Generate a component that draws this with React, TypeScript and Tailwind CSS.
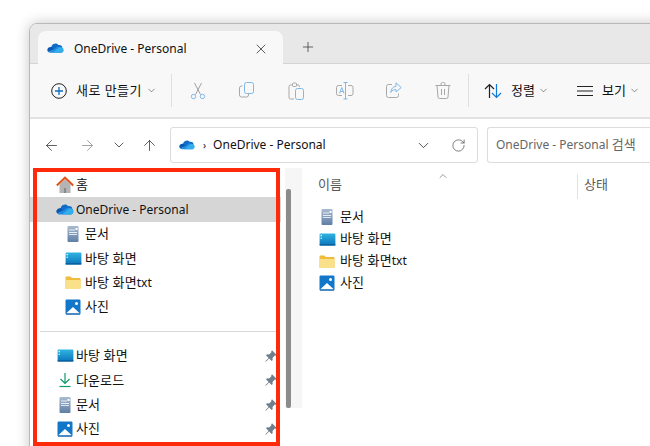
import React from "react";
import { ArrowLeft, ArrowRight, ArrowUp, ChevronDown, ChevronUp, RotateCw, X, Plus } from "lucide-react";

const font = { fontFamily: '"Noto Sans", "Noto Sans CJK KR", sans-serif' };

function Cloud({ s = 26 }: { s?: number }) {
  return (
    <svg width={s} height={s * 0.62} viewBox="0 0 26 16">
      <path d="M10 1.500c2.600-1.600 6-.8 7.600 1.600 3-.6 5.600 1 6 3.400L9 12 5 7.200c.4-1 1-1.400 1.800-1.600.4-1.800 1.600-3.200 3.200-4.100z" fill="#0f6cc8" />
      <path d="M5.500 6C2.800 6 .5 8 .5 10.500c0 1.300.6 2.500 1.500 3.200L11 9.500 8 7c-.8-.6-1.600-1-2.500-1z" fill="#0a57b0" />
      <path d="M17 5.500c-1.600 0-3 .8-3.800 2L2 13.700c.7.800 1.800 1.300 3 1.300h17.500L24.800 8c-1-1.500-4-2.500-7.800-2.500z" fill="#1f8ae0" />
      <path d="M20 6.500c3 0 5.500 1.800 5.500 4.500 0 2.300-1.800 4-4 4H9l9-8c.6-.4 1.300-.5 2-.5z" fill="#33aeea" />
    </svg>
  );
}
function Home() {
  return (
    <svg width="18" height="18" viewBox="0 0 18 18">
      <path d="M3.500 8.500V17h4v-5h3v5h4V8.500L9 3.500z" fill="#b4b4b4" />
      <path d="M7.500 12h3v5h-3z" fill="#8a8a8a" />
      <path d="M.8 9.500L9 1.700l8.200 7.800" fill="none" stroke="#e0541c" strokeWidth="2" />
    </svg>
  );
}
function Doc() {
  return (
    <svg width="16" height="18" viewBox="0 0 16 18">
      <defs>
        <linearGradient id="docg" x1="0" x2="0" y1="0" y2="1">
          <stop offset="0" stopColor="#a9bbd0" />
          <stop offset="1" stopColor="#5f7ea6" />
        </linearGradient>
      </defs>
      <rect x="2.500" y="1" width="11" height="16" rx="1" fill="url(#docg)" />
      <rect x="4" y="4.500" width="6" height="1" fill="#e8eef5" />
      <rect x="4" y="7" width="8" height="1" fill="#e8eef5" />
      <rect x="4" y="9" width="8" height="1" fill="#dde5ee" />
      <rect x="10.500" y="3" width="2" height="2" fill="#fff" />
    </svg>
  );
}
function Desktop() {
  return (
    <svg width="17" height="13" viewBox="0 0 18 14">
      <defs>
        <linearGradient id="deskg" x1="0" x2="0" y1="0" y2="1">
          <stop offset="0" stopColor="#2fb5e0" />
          <stop offset="1" stopColor="#0b74bd" />
        </linearGradient>
      </defs>
      <rect x="0.500" y="0.500" width="17" height="13" rx="1" fill="url(#deskg)" />
      <rect x="1.500" y="2" width="1.500" height="1.500" fill="#e8fbff" />
      <rect x="1.500" y="5" width="1.500" height="1.500" fill="#bdeeff" />
      <rect x="0.500" y="12" width="17" height="1.500" fill="#0a5f9c" />
    </svg>
  );
}
function Folder() {
  return (
    <svg width="16" height="13" viewBox="0 0 16 13">
      <path d="M0.500 1.500a1 1 0 0 1 1-1h4l1.500 1.500h7.500a1 1 0 0 1 1 1v9a1 1 0 0 1-1 1h-13a1 1 0 0 1-1-1z" fill="#f0bc3e" />
      <path d="M0.500 4h15v8a1 1 0 0 1-1 1h-13a1 1 0 0 1-1-1z" fill="#fbe08a" />
    </svg>
  );
}
function Picture() {
  return (
    <svg width="16" height="16" viewBox="0 0 16 16">
      <rect x="0.500" y="0.500" width="15" height="15" rx="1.200" fill="#1277c9" />
      <path d="M1 14.500L8 8l7 6.500z" fill="#fff" />
      <circle cx="11.500" cy="4.500" r="1.500" fill="#fff" />
      <path d="M1 14.500h14v1H1z" fill="#0c5da5" />
    </svg>
  );
}
function Download() {
  return (
    <svg width="14" height="16" viewBox="0 0 14 16" fill="none" stroke="#109a6c" strokeWidth="1.200">
      <path d="M7 1v10M2.500 7L7 11.500 11.500 7" />
      <path d="M1.500 14.500h11" />
    </svg>
  );
}
function Pin() {
  return (
    <svg width="12" height="12" viewBox="0 0 12 12">
      <path d="M7 .3L11.700 5l-1.100 .8-.8-.2-2.300 2.300.2 2.100-1 1L4.100 8.400.8 11.700.3 11.200 3.600 7.900 1 5.300l1-1 2.100.2 2.300-2.300-.2-.8z" fill="#6f7f8c" />
    </svg>
  );
}
function Cut() {
  return (
    <svg width="18" height="18" viewBox="0 0 18 18" fill="none" strokeWidth="1">
      <path d="M5.500 1l6 11.500M12.500 1l-6 11.500" stroke="#a0a0a0" />
      <circle cx="4.500" cy="14.500" r="2.200" stroke="#7fb8e8" />
      <circle cx="13.500" cy="14.500" r="2.200" stroke="#7fb8e8" />
    </svg>
  );
}
function Copy() {
  return (
    <svg width="16" height="16" viewBox="0 0 16 16" fill="none" strokeWidth="1">
      <path d="M3.500 4H2.500a2 2 0 0 0-2 2v7a2 2 0 0 0 2 2h5a2 2 0 0 0 2-2v-1" stroke="#a8a8a8" />
      <rect x="5.500" y=".5" width="9" height="11" rx="2" stroke="#7fb8e8" />
    </svg>
  );
}
function Paste() {
  return (
    <svg width="16" height="18" viewBox="0 0 16 18" fill="none" strokeWidth="1">
      <path d="M5 3H2.500A1.500 1.500 0 0 0 1 4.500v11A1.500 1.500 0 0 0 2.500 17H6M11.500 5V4.500A1.500 1.500 0 0 0 10 3H8" stroke="#a8a8a8" />
      <rect x="4.500" y="1" width="4" height="3.500" rx="1" stroke="#a8a8a8" />
      <rect x="7.500" y="6.500" width="8" height="11" rx="2" stroke="#7fb8e8" />
    </svg>
  );
}
function Rename() {
  return (
    <svg width="18" height="18" viewBox="0 0 18 18" fill="none" strokeWidth="1">
      <path d="M6 3.500H2.500a2 2 0 0 0-2 2v6a2 2 0 0 0 2 2H6M12 3.500h3a2 2 0 0 1 2 2v6a2 2 0 0 1-2 2h-3" stroke="#a8a8a8" />
      <path d="M9.500.5v16.500M7.500.5h4M7.500 17h4" stroke="#7fb8e8" />
      <path d="M3.500 11.500L5.800 5.500 8 11.500M4.300 9.500h3" stroke="#7fb8e8" />
    </svg>
  );
}
function Share() {
  return (
    <svg width="16" height="16" viewBox="0 0 16 16" fill="none" strokeWidth="1">
      <path d="M6 2.500H2.500a2 2 0 0 0-2 2v9a2 2 0 0 0 2 2h8a2 2 0 0 0 2-2v-2" stroke="#a8a8a8" />
      <path d="M10 .8l5.200 4.700L10 10V7.500c-2.500 0-4 1-5.200 3 .2-3.500 2-5.800 5.200-6.200z" stroke="#7fb8e8" />
    </svg>
  );
}
function Trash() {
  return (
    <svg width="16" height="17" viewBox="0 0 16 17" fill="none" stroke="#a8a8a8" strokeWidth="1">
      <path d="M.5 3.500h15M6 3.500V2a1.500 1.500 0 0 1 1.500-1.500h1A1.500 1.500 0 0 1 10 2v1.500" />
      <path d="M2 3.500l1 11.500a1.500 1.500 0 0 0 1.500 1.500h7A1.500 1.500 0 0 0 13 15l1-11.500" />
      <path d="M6.500 7v6M9.500 7v6" />
    </svg>
  );
}
function Sort() {
  return (
    <svg width="18" height="16" viewBox="0 0 18 16" fill="none" strokeWidth="1.200">
      <path d="M5.500 15V1.500M1 6l4.500-4.500L10 6" stroke="#222" />
      <path d="M12.500 1v13.500M8 10l4.500 4.500L17 10" stroke="#0f7bd6" />
    </svg>
  );
}
function Lines() {
  return (
    <svg width="16" height="12" viewBox="0 0 16 12" fill="none" stroke="#222" strokeWidth="1">
      <path d="M0 1.500h16M0 6h16M0 10.500h16" />
    </svg>
  );
}
function NewIcon() {
  return (
    <svg width="16" height="16" viewBox="0 0 16 16" fill="none">
      <circle cx="8" cy="8" r="7.300" stroke="#222" strokeWidth="1" />
      <path d="M8 4v8M4 8h8" stroke="#0f6cbd" strokeWidth="1.300" />
    </svg>
  );
}

function ToolIcon({ children }: { children: React.ReactNode }) {
  return <div className="flex w-[49px] justify-center">{children}</div>;
}

function Kr({ children }: { children: React.ReactNode }) {
  return <span className="text-[13px] tracking-[0.1px]">{children}</span>;
}

function NavRow({ icon, label, indent, active, pin }: { icon: React.ReactNode; label: React.ReactNode; indent?: boolean; active?: boolean; pin?: boolean }) {
  return (
    <div className={`flex h-[24.4px] items-center text-[12px] text-[#111] ${active ? "bg-[#d6d6d6]" : ""} ${indent ? "pl-[33px]" : "pl-[25px]"}`}>
      <div className={`-ml-[1px] flex w-[22px] shrink-0 justify-center ${indent ? "mr-[1px]" : "mr-0"}`}>{icon}</div>
      <span className="flex-1 whitespace-pre">{label}</span>
      {pin && <div className="pr-[4px]"><Pin /></div>}
    </div>
  );
}

function FileRow({ icon, label }: { icon: React.ReactNode; label: React.ReactNode }) {
  return (
    <div className="flex h-[22px] items-center text-[12px] text-[#111]">
      <div className="flex w-[18px] justify-center">{icon}</div>
      <span className="ml-[4px] whitespace-pre">{label}</span>
    </div>
  );
}

export default function App() {
  return (
    <div className="relative h-[446px] w-[650px] overflow-hidden bg-white pl-[29px] pt-[23px]" style={font}>
      <div className="h-[440px] w-[640px] rounded-tl-[8px] border border-[#b9b9b9] bg-white shadow-[0_0_14px_rgba(0,0,0,0.22)]">
        {/* tab strip */}
        <div className="flex h-[40px] items-end rounded-tl-[7px] border-b border-[#d4d4d4] bg-[#e8e8e8] pl-[8px]">
          <div className="-mb-px flex h-[33px] w-[245px] items-center rounded-t-[8px] bg-[#f8f8f8] pl-[9px] pt-[2px] text-[12px] text-[#111]">
            <Cloud s={17} />
            <span className="ml-[10px] flex-1">OneDrive - Personal</span>
            <X size={16} strokeWidth={1.1} className="mr-[14px] text-[#222]" />
          </div>
          <Plus size={16} strokeWidth={1.1} className="mb-[8px] ml-[17px] text-[#333]" />
        </div>
        {/* toolbar */}
        <div className="flex h-[55px] items-center border-b-2 border-[#e2e2e2] bg-[#f8f8f8] text-[12px] text-[#111]">
          <div className="ml-[21px]"><NewIcon /></div>
          <span className="ml-[9px] mt-[1px] text-[13px] tracking-[0.45px]">새로 만들기</span>
          <ChevronDown size={11} strokeWidth={1.3} className="ml-[4px] text-[#444]" />
          <div className="ml-[14px] h-[33px] w-px bg-[#e0e0e0]" />
          <div className="ml-[2px] flex">
            <ToolIcon><Cut /></ToolIcon>
            <ToolIcon><Copy /></ToolIcon>
            <ToolIcon><Paste /></ToolIcon>
            <ToolIcon><Rename /></ToolIcon>
            <ToolIcon><Share /></ToolIcon>
            <ToolIcon><Trash /></ToolIcon>
          </div>
          <div className="h-[33px] w-px bg-[#e0e0e0]" />
          <div className="ml-[15px]"><Sort /></div>
          <span className="ml-[9px] mt-[1px]"><Kr>정렬</Kr></span>
          <ChevronDown size={11} strokeWidth={1.3} className="ml-[3px] text-[#444]" />
          <div className="ml-[28px]"><Lines /></div>
          <span className="ml-[9px] mt-[1px]"><Kr>보기</Kr></span>
          <ChevronDown size={11} strokeWidth={1.3} className="ml-[3px] text-[#444]" />
        </div>
        {/* address bar */}
        <div className="flex h-[49px] items-center bg-white pt-[3px]">
          <ArrowLeft size={17} strokeWidth={1.1} className="ml-[13px] text-[#333]" />
          <ArrowRight size={17} strokeWidth={1.1} className="ml-[19px] text-[#888]" />
          <ChevronDown size={16} strokeWidth={1.2} className="ml-[15px] text-[#333]" />
          <ArrowUp size={17} strokeWidth={1.1} className="ml-[14px] text-[#333]" />
          <div className="ml-[12px] flex h-[36px] w-[308px] items-center rounded-[3px] border border-[#dcdcdc] bg-white pl-[8px] text-[12px] text-[#111]">
            <Cloud s={16} />
            <span className="ml-[8px] text-[10px]">›</span>
            <span className="ml-[7px] flex-1">OneDrive - Personal</span>
            <ChevronDown size={17} strokeWidth={1.2} className="mr-[19px] text-[#333]" />
            <RotateCw size={15} strokeWidth={1.1} className="mr-[11px] text-[#444]" />
          </div>
          <div className="ml-[9px] flex h-[36px] flex-1 items-center rounded-l-[3px] border border-r-0 border-[#dcdcdc] pl-[8px] text-[12px] text-[#666]">
            <span className="whitespace-pre">OneDrive - Personal <Kr>검색</Kr></span>
          </div>
        </div>
        {/* body */}
        <div className="flex h-[280px]">
          <div className="w-[251px] shrink-0 pt-[5px]">
            <NavRow icon={<Home />} label={<Kr>홈</Kr>} />
            <NavRow icon={<Cloud s={18} />} label="OneDrive - Personal" active />
            <NavRow indent icon={<Doc />} label={<Kr>문서</Kr>} />
            <NavRow indent icon={<Desktop />} label={<Kr>바탕 화면</Kr>} />
            <NavRow indent icon={<Folder />} label={<><Kr>바탕 화면</Kr>txt</>} />
            <NavRow indent icon={<Picture />} label={<Kr>사진</Kr>} />
            <div className="flex h-[24.4px] items-center pl-[10px] pr-[5px]">
              <div className="h-px w-full bg-[#d8d8d8]" />
            </div>
            <NavRow icon={<Desktop />} label={<Kr>바탕 화면</Kr>} pin />
            <NavRow icon={<Download />} label={<Kr>다운로드</Kr>} pin />
            <NavRow icon={<Doc />} label={<Kr>문서</Kr>} pin />
            <NavRow icon={<Picture />} label={<Kr>사진</Kr>} pin />
          </div>
          <div className="ml-[4px] h-[240px] w-[17px] shrink-0 bg-[#f6f6f6] pl-[1px] pt-[21px]">
            <div className="h-[219px] w-[5px] rounded-[2px] bg-[#8b8b8b]" />
          </div>
          <div className="flex-1 pl-[16px] pt-[1px]">
            <div className="relative flex h-[30px] items-center pt-[2px] text-[12px] text-[#5a5a5a]">
              <Kr>이름</Kr>
              <ChevronUp size={12} strokeWidth={1.2} className="absolute left-[119px] top-[1px] text-[#555]" />
              <div className="absolute left-[259px] top-[5px] h-[25px] w-px bg-[#e2e2e2]" />
              <span className="absolute left-[266px]"><Kr>상태</Kr></span>
            </div>
            <div className="pt-[7px]">
              <FileRow icon={<Doc />} label={<Kr>문서</Kr>} />
              <FileRow icon={<Desktop />} label={<Kr>바탕 화면</Kr>} />
              <FileRow icon={<Folder />} label={<><Kr>바탕 화면</Kr>txt</>} />
              <FileRow icon={<Picture />} label={<Kr>사진</Kr>} />
            </div>
          </div>
        </div>
      </div>
      {/* red annotation */}
      <div className="absolute left-[33px] top-[168px] h-[278px] w-[247px] border-[4px] border-[#ff2a0a]" />
    </div>
  );
}
